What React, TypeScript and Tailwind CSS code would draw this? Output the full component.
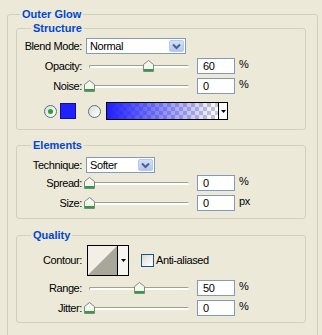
import React from 'react'

const font = "font-['Liberation_Sans',Arial,sans-serif]"

function Chevron() {
  return (
    <svg width="9" height="7" viewBox="0 0 9 7">
      <path d="M1 1.5 L4.5 5 L8 1.5" fill="none" stroke="#4d6185" strokeWidth="2" />
    </svg>
  )
}

function Select({ value, width }: { value: string; width: string }) {
  return (
    <div className={`${width} h-[16px] flex items-center bg-white border border-[#7f9db9]`}>
      <span className="flex-1 pl-[3px] leading-[14px]">{value}</span>
      <div className="w-[15px] h-[12px] mr-[1px] flex items-center justify-center rounded-[2px] border border-[#b7c8f2] bg-gradient-to-b from-[#d4e0fb] to-[#b3c7f5]">
        <Chevron />
      </div>
    </div>
  )
}

function Thumb() {
  return (
    <svg width="11" height="12" viewBox="0 0 11 12">
      <path d="M0.5 11.5 V4.5 L5.5 0.5 L10.5 4.5 V11.5 Z" fill="#f6f6f1" stroke="#7d8a80" />
      <rect x="1" y="9" width="9" height="2" fill="#2aa13a" />
    </svg>
  )
}

function Slider({ value }: { value: number }) {
  return (
    <div className="relative w-[110px] h-[16px] ml-[2px]">
      <div className="absolute left-[5px] right-[5px] top-[7px] h-[3px] rounded-[2px] border-t border-l border-[#a09f93] bg-white" />
      <div className="absolute top-[2px] leading-none" style={{ left: Math.round((value / 100) * 99) }}>
        <Thumb />
      </div>
    </div>
  )
}

function Field({ value }: { value: string }) {
  return (
    <div className="ml-[3px] w-[38px] h-[16px] bg-white border border-[#7f9db9] pl-[5px] leading-[14px]">{value}</div>
  )
}

function SliderRow({ label, value, unit, className = '' }: { label: string; value: number; unit: string; className?: string }) {
  return (
    <div className={`flex items-center h-[16px] ${className}`}>
      <div className="w-[65px] text-right">{label}</div>
      <Slider value={value} />
      <Field value={String(value)} />
      <span className="ml-[4px] -mt-[3px]">{unit}</span>
    </div>
  )
}

function Radio({ checked }: { checked?: boolean }) {
  return (
    <div className="w-[13px] h-[13px] rounded-full border border-[#5a6f80] bg-gradient-to-br from-[#dcdcd4] to-white flex items-center justify-center">
      {checked && <div className="w-[5px] h-[5px] rounded-full bg-[#2aa13a]" />}
    </div>
  )
}

function Group({ title, className = '', children }: { title: string; className?: string; children: React.ReactNode }) {
  return (
    <fieldset className={`w-[290px] border border-[#d0d0bf] rounded-[3px] ${className}`}>
      <legend className="ml-[14px] px-[2px] font-bold tracking-normal text-[#0046d5] leading-[13px]">{title}</legend>
      {children}
    </fieldset>
  )
}

export default function App() {
  return (
    <div className={`w-[322px] h-[335px] overflow-hidden bg-[#ece9d8] text-[11px] tracking-[-0.4px] text-black ${font}`}>
      <fieldset className="ml-[7px] mt-[8px] w-[311px] pl-[8px] pb-[40px] border border-[#d0d0bf] rounded-[3px]">
        <legend className="ml-[4px] px-[2px] font-bold tracking-normal text-[#0046d5] leading-[13px]">Outer Glow</legend>

        {/* Structure */}
        <Group title="Structure" className="mt-[1px] pt-[3px] pb-[9px]">
          <div className="flex items-center h-[16px]">
            <div className="w-[65px] text-right">Blend Mode:</div>
            <div className="ml-[4px]">
              <Select value="Normal" width="w-[100px]" />
            </div>
          </div>
          <SliderRow label="Opacity:" value={60} unit="%" className="mt-[4px]" />
          <SliderRow label="Noise:" value={0} unit="%" className="mt-[4px]" />
          <div className="flex items-center h-[18px] mt-[8px]">
            <div className="ml-[27px]"><Radio checked /></div>
            <div className="ml-[3px] w-[16px] h-[16px] bg-[#2121ff] border border-[#10108a]" />
            <div className="ml-[12px]"><Radio /></div>
            <div className="ml-[5px] w-[122px] h-[18px] flex border border-black">
              <div className="flex-1 [background:linear-gradient(to_right,#1f1fff,#1f1fff00),repeating-conic-gradient(#c9c9d0_0_25%,#ffffff_0_50%)_0_0/8px_8px]" />
              <div className="w-[9px] border-l border-black bg-white flex items-center justify-center">
                <svg width="5" height="3" viewBox="0 0 5 3"><path d="M0 0 H5 L2.5 3 Z" fill="#000" /></svg>
              </div>
            </div>
          </div>
        </Group>

        {/* Elements */}
        <Group title="Elements" className="mt-[9px] pt-[5px] pb-[7px]">
          <div className="flex items-center h-[16px]">
            <div className="w-[65px] text-right">Technique:</div>
            <div className="ml-[4px]">
              <Select value="Softer" width="w-[69px]" />
            </div>
          </div>
          <SliderRow label="Spread:" value={0} unit="%" className="mt-[2px]" />
          <SliderRow label="Size:" value={0} unit="px" className="mt-[4px]" />
        </Group>

        {/* Quality */}
        <Group title="Quality" className="mt-[10px] pt-[3px] pb-[6px]">
          <div className="flex items-center h-[31px]">
            <div className="w-[65px] text-right">Contour:</div>
            <div className="ml-[5px] w-[42px] h-[31px] flex border border-black">
              <div className="flex-1 bg-[#f1efe6]">
                <svg width="29" height="29" viewBox="0 0 29 29" className="block">
                  <path d="M0 29 L29 0 V29 Z" fill="#a9a799" />
                </svg>
              </div>
              <div className="w-[11px] border-l border-black bg-[#f6f5f0] flex items-center justify-center">
                <svg width="5" height="3" viewBox="0 0 5 3"><path d="M0 0 H5 L2.5 3 Z" fill="#000" /></svg>
              </div>
            </div>
            <div className="ml-[12px] w-[13px] h-[13px] border border-[#1c5180] bg-gradient-to-br from-[#dcdcd5] to-white" />
            <span className="ml-[2px]">Anti-aliased</span>
          </div>
          <SliderRow label="Range:" value={50} unit="%" className="mt-[4px]" />
          <SliderRow label="Jitter:" value={0} unit="%" className="mt-[4px]" />
        </Group>
      </fieldset>
    </div>
  )
}
